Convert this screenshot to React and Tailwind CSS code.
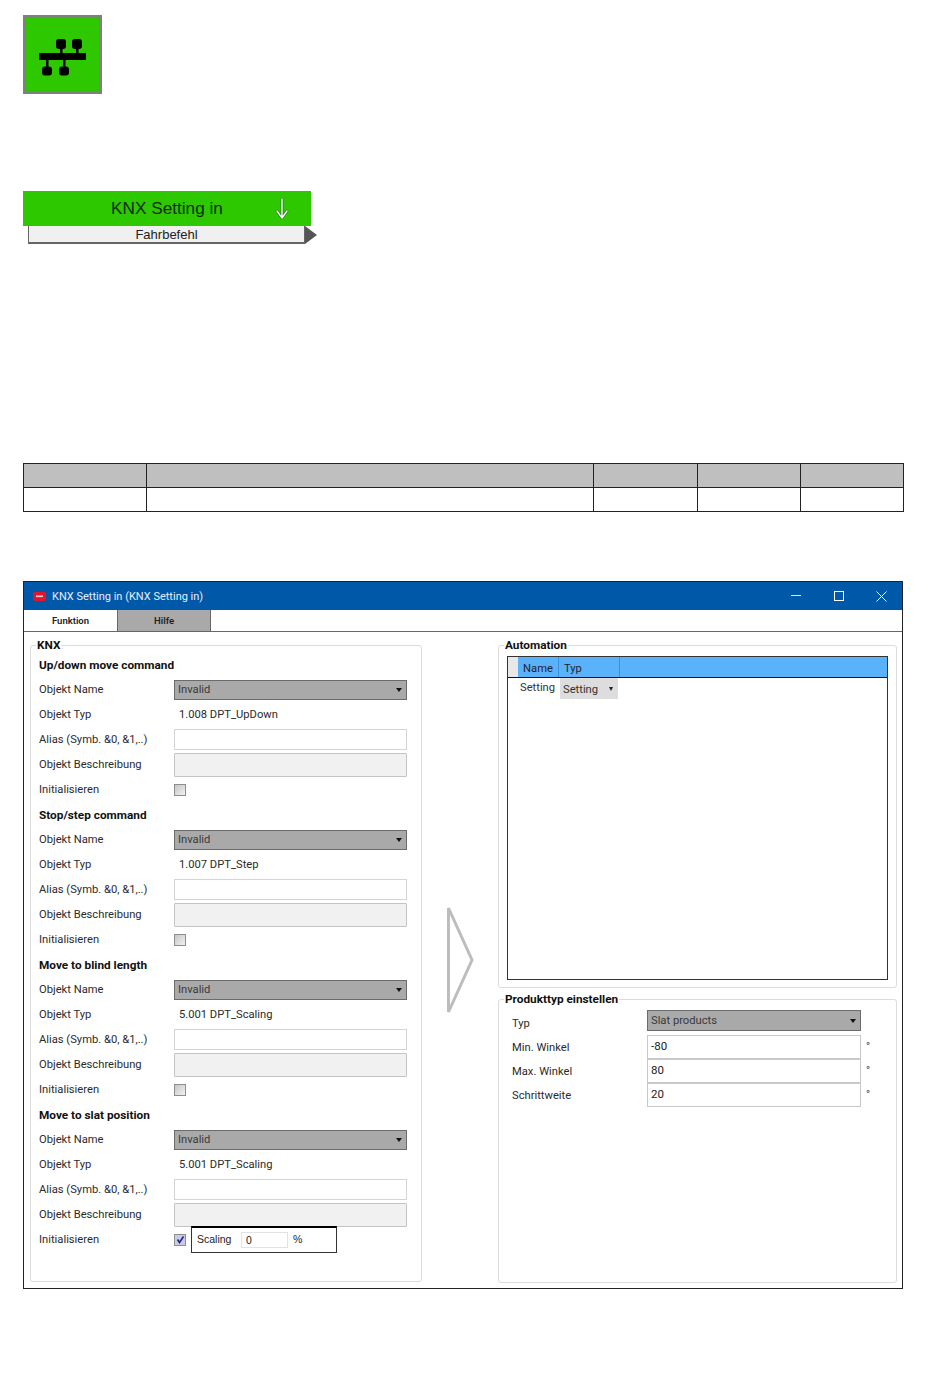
const UI_FONT = "font-['Roboto','Noto_Sans',sans-serif]";

const SECTIONS = [
  { title: "Up/down move command", typ: "1.008 DPT_UpDown" },
  { title: "Stop/step command", typ: "1.007 DPT_Step" },
  { title: "Move to blind length", typ: "5.001 DPT_Scaling" },
  { title: "Move to slat position", typ: "5.001 DPT_Scaling", init: true },
];

function NetworkIcon() {
  return (
    <svg width="73" height="73" viewBox="26 18 73 73" fill="#000">
      <rect x="39" y="53" width="47" height="7" />
      <rect x="56" y="39" width="10" height="10" rx="3" />
      <rect x="72" y="39" width="10" height="10" rx="3" />
      <rect x="42" y="66.5" width="10" height="9" rx="3" />
      <rect x="59" y="66.5" width="10" height="9" rx="3" />
      <rect x="60" y="48" width="2.5" height="6" />
      <rect x="76" y="48" width="2.5" height="6" />
      <rect x="46" y="59" width="2.5" height="8" />
      <rect x="63" y="59" width="2.5" height="8" />
    </svg>
  );
}

function Arrow() {
  return (
    <svg width="14" height="22" viewBox="0 0 14 22" fill="none" strokeLinecap="round" strokeLinejoin="round">
      <path d="M7 1v18M2 13l5 7 5-7" stroke="#1f6d0a" strokeWidth="2.6" />
      <path d="M7 1v18M2 13l5 7 5-7" stroke="#fff" strokeWidth="1.4" />
    </svg>
  );
}

function Select({ value, className = "" }) {
  return (
    <div className={`flex h-[20px] items-center justify-between border border-[#6b6b6b] bg-[#a9a9a9] pl-[3px] pr-[4px] text-[11.2px] text-[#3a3a3a] ${className}`}>
      <span className="pt-[2px]">{value}</span>
      <span className="h-0 w-0 border-x-[3px] border-t-[4px] border-x-transparent border-t-[#111]" />
    </div>
  );
}

function Row({ label, children }) {
  return (
    <div className="flex h-[25px] items-center">
      <span className="w-[135px] shrink-0 pt-[2px] text-[11.2px] text-[#2b2b2b]">{label}</span>
      {children}
    </div>
  );
}

function Checkbox({ checked }) {
  return (
    <span className={`flex h-[12px] w-[12px] shrink-0 items-center justify-center border border-[#8e8e8e] ${checked ? "bg-[#c9cbe8]" : "bg-linear-to-br from-[#c6c6c6] to-[#f2f2f2]"}`}>
      {checked && (
        <svg width="9" height="9" viewBox="0 0 9 9" fill="none">
          <path d="M1.5 4.5l2 3 4-6" stroke="#26267a" strokeWidth="1.6" />
        </svg>
      )}
    </span>
  );
}

function KnxSection({ section }) {
  return (
    <div>
      <div className="flex h-[25px] items-center pt-[2px] text-[11.8px] font-bold text-[#111]">{section.title}</div>
      <Row label="Objekt Name">
        <Select value="Invalid" className="w-[233px]" />
      </Row>
      <Row label="Objekt Typ">
        <span className="pl-[5px] pt-[2px] text-[11.2px] text-[#2b2b2b]">{section.typ}</span>
      </Row>
      <Row label="Alias (Symb. &0, &1,..)">
        <div className="h-[21px] w-[233px] border border-[#d4d4d4] bg-white" />
      </Row>
      <Row label="Objekt Beschreibung">
        <div className="h-[24px] w-[233px] rounded-[1px] border border-[#c4c4c4] bg-[#f1f1f1]" />
      </Row>
      <Row label="Initialisieren">
        <Checkbox checked={section.init} />
        {section.init && (
          <div className="ml-[5px] flex h-[27px] w-[146px] items-center border border-t-2 border-[#333] border-t-black pl-[5px] font-['Liberation_Sans',sans-serif] text-[10.5px] text-[#222]">
            <span className="w-[44px]">Scaling</span>
            <span className="h-[16px] w-[47px] border border-[#e2e2e2] pl-[4px] leading-[14px]">0</span>
            <span className="pl-[5px]">%</span>
          </div>
        )}
      </Row>
    </div>
  );
}

function Group({ title, className, children }) {
  return (
    <div className={`rounded-[3px] border border-[#dcdcdc] ${className}`}>
      <div className="-mt-[8px] ml-[5px] h-[14px] w-fit bg-white px-[1px] text-[11.8px] leading-[14px] font-bold text-[#111]">{title}</div>
      {children}
    </div>
  );
}

function ProductRow({ label, value }) {
  return (
    <div className="flex h-[24px] items-center pl-[13px]">
      <span className="w-[135px] shrink-0 pt-[2px] text-[11.2px] text-[#2b2b2b]">{label}</span>
      <div className="flex h-[24px] w-[214px] items-center border border-[#c9c9c9] bg-white pl-[3px] text-[11.5px] text-[#222]">{value}</div>
      <span className="pl-[5px] text-[11px] text-[#333]">°</span>
    </div>
  );
}

function SettingsWindow() {
  return (
    <div className={`mt-[69px] h-[708px] w-[880px] border border-[#222] ${UI_FONT}`}>
      {/* Title bar */}
      <div className="flex h-[28px] items-center bg-[#0058a8] text-white">
        <svg className="ml-[9px]" width="13" height="9" viewBox="0 0 13 9">
          <rect width="13" height="9" rx="2" fill="#e0162b" />
          <rect x="3" y="3.5" width="7" height="1.6" fill="#f6c9cd" />
        </svg>
        <span className="ml-[6px] pt-[2px] text-[11px] text-[#e4eefa]">KNX Setting in (KNX Setting in)</span>
        <div className="ml-auto mr-[15px] flex items-center gap-[32px]">
          <svg width="11" height="10" viewBox="0 0 11 10" stroke="#dfe9f5" fill="none"><path d="M0 4.5h10" /></svg>
          <svg width="10" height="10" viewBox="0 0 10 10" stroke="#fff" fill="none"><rect x="0.5" y="0.5" width="9" height="9" /></svg>
          <svg width="11" height="11" viewBox="0 0 11 11" stroke="#fff" fill="none"><path d="M0.5 0.5l10 10M10.5 0.5l-10 10" /></svg>
        </div>
      </div>

      {/* Tabs */}
      <div className="flex h-[22px] border-b border-[#666] text-[9.5px] font-semibold text-[#222]">
        <div className="flex w-[93px] items-center justify-center bg-white pt-[1px]">Funktion</div>
        <div className="flex w-[94px] items-center justify-center border-x border-[#666] bg-[#a9a9a9] pt-[1px]">Hilfe</div>
      </div>

      <div className="flex items-start pl-[6px]">
        {/* KNX column */}
        <Group title="KNX" className="mt-[13px] h-[637px] w-[392px]">
          <div className="pl-[8px]">
            {SECTIONS.map((s) => (
              <KnxSection key={s.title} section={s} />
            ))}
          </div>
        </Group>

        <svg className="ml-[25px] mt-[274px] shrink-0" width="27" height="108" viewBox="0 0 27 108" fill="none">
          <path d="M1.5 2L25 54 1.5 106Z" stroke="#bdbdbd" strokeWidth="3" />
        </svg>

        <div className="ml-[24px] w-[399px]">
          {/* Automation */}
          <Group title="Automation" className="mt-[13px] h-[343px]">
            <div className="mx-[8px] mt-[4px] h-[324px] border border-[#333]">
              <div className="flex h-[21px] border-b border-[#111] bg-[#5ab2fb] text-[11.2px] text-[#223]">
                <div className="w-[10px] bg-[#e8e8e8]" />
                <div className="flex w-[41px] items-center justify-center border-r border-[#3d8fd8] pt-[4px]">Name</div>
                <div className="w-[61px] border-r border-[#3d8fd8] pl-[5px] pt-[2px] leading-[20px]">Typ</div>
              </div>
              <div className="flex text-[11.2px] text-[#333]">
                <span className="w-[52px] pl-[12px] leading-[19px]">Setting</span>
                <div className="flex h-[21px] w-[58px] items-center justify-between bg-[#dddddd] pl-[3px] pr-[5px]">
                  <span className="pt-[4px]">Setting</span>
                  <span className="h-0 w-0 border-x-[2.5px] border-t-[4px] border-x-transparent border-t-[#222]" />
                </div>
              </div>
            </div>
          </Group>

          {/* Produkttyp */}
          <Group title="Produkttyp einstellen" className="mt-[11px] h-[284px]">
            <div className="mt-[5px]">
              <div className="flex h-[24px] pl-[13px]">
                <span className="w-[135px] shrink-0 self-center pt-[2px] text-[11.2px] text-[#2b2b2b]">Typ</span>
                <Select value="Slat products" className="-mt-[1px] !h-[21px] w-[214px]" />
              </div>
              <ProductRow label="Min. Winkel" value="-80" />
              <ProductRow label="Max. Winkel" value="80" />
              <ProductRow label="Schrittweite" value="20" />
            </div>
          </Group>
        </div>
      </div>
    </div>
  );
}

export default function App() {
  return (
    <div className="h-[1378px] w-[950px] overflow-hidden bg-white pl-[23px] pt-[15px]">
      <div className="flex h-[79px] w-[79px] items-center justify-center border-[3px] border-[#808080] bg-[#2dc800]">
        <NetworkIcon />
      </div>

      {/* Function block */}
      <div className="mt-[97px] w-[294px] font-['Liberation_Sans',sans-serif]">
        <div className="grid h-[35px] w-[288px] grid-cols-[1fr_auto_1fr] items-center bg-[#2dc800] text-[17.2px] text-[#0a2f05]">
          <span />
          <span className="pt-[1px]">KNX Setting in</span>
          <span className="flex justify-end pr-[22px]">
            <Arrow />
          </span>
        </div>
        <div className="ml-[5px] flex items-stretch">
          <div className="flex h-[18px] w-[277px] items-center justify-center border border-t-0 border-[#666] border-b-2 bg-[#f0f0f0] pt-[1px] text-[13px] text-[#222]">
            Fahrbefehl
          </div>
          <svg width="12" height="18" viewBox="0 0 12 18">
            <path d="M0 0l12 9-12 9z" fill="#555" />
          </svg>
        </div>
      </div>

      {/* Empty table */}
      <table className="mt-[219px] w-[881px] table-fixed border-collapse">
        <colgroup>
          <col className="w-[123px]" />
          <col className="w-[447px]" />
          <col className="w-[104px]" />
          <col className="w-[103px]" />
          <col className="w-[103px]" />
        </colgroup>
        <tbody>
          <tr className="h-[24px] bg-[#bfbfbf]">
            {[0, 1, 2, 3, 4].map((i) => <td key={i} className="border border-[#222]" />)}
          </tr>
          <tr className="h-[24px]">
            {[0, 1, 2, 3, 4].map((i) => <td key={i} className="border border-[#222]" />)}
          </tr>
        </tbody>
      </table>

      <SettingsWindow />
    </div>
  );
}
